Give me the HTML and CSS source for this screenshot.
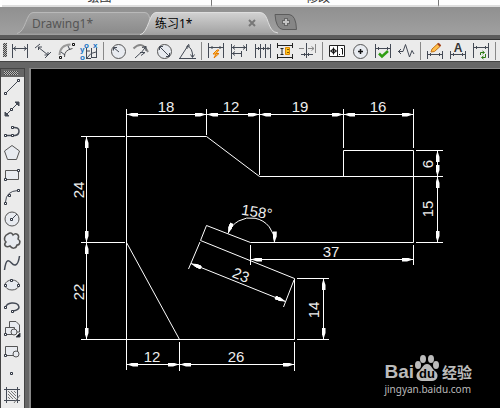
FILE: index.html
```html
<!DOCTYPE html>
<html lang="zh-CN">
<head>
  <meta charset="UTF-8" />
  <meta name="viewport" content="width=device-width, initial-scale=1.0"/>
  <title>练习1</title>
  <link rel="stylesheet" href="styles.css">
</head>
<body>

  <header class="ribbon">
    <div class="panel">绘图</div>
    <div class="panel">修改</div>
    <div class="panel last"></div>
  </header>

  <nav class="tabs">
    <a class="tab" href="#drawing1">
      <svg class="tab-shape" viewBox="0 0 138 24" preserveAspectRatio="none" aria-hidden="true">
        <defs><linearGradient id="tab-off" x2="0" y2="1"><stop offset="0" stop-color="#a2a2a2"/><stop offset="1" stop-color="#8b8b8b"/></linearGradient></defs>
        <path d="M0 22.500C9 21 9 1.500 16 1.500H128C135 1.500 132 19 138 22.500" fill="url(#tab-off)" stroke="#b9b9b9"/>
      </svg>
      <span>Drawing1*</span>
    </a>
    <a class="tab active" href="#practice1">
      <svg class="tab-shape" viewBox="0 0 138 24" preserveAspectRatio="none" aria-hidden="true">
        <defs><linearGradient id="tab-on" x2="0" y2="1"><stop offset="0" stop-color="#d2d2d2"/><stop offset="1" stop-color="#a0a0a0"/></linearGradient></defs>
        <path d="M0 24C9 21 9 1.500 16 1.500H120C130 1.500 126 21 138 22" fill="url(#tab-on)" stroke="#dedede"/>
      </svg>
      <span>练习1*</span>
      <svg class="close" viewBox="0 0 8 8" aria-hidden="true"><path d="M1 1L7 7M7 1L1 7" stroke="#777" stroke-width="2"/></svg>
    </a>
    <button class="new-tab" aria-label="New drawing">
      <svg width="24" height="18" viewBox="0 0 24 18">
        <path d="M1 1.500H15Q22 2 22.500 16.500H9Q2 16 1 1.500Z" fill="#868686" stroke="#5c5c5c"/>
        <path d="M12 5V13M8 9H16" stroke="#666" stroke-width="4"/>
        <path d="M12 6V12M9 9H15" stroke="#c4c4c4" stroke-width="2"/>
      </svg>
    </button>
  </nav>

  <div class="toolbar">
    <span class="grip"></span>
    <button aria-label="Linear"><svg class="icon"><path d="M3.500 4V18M18.500 4V18M4 8.500H18M7 6.500L4.500 8.500L7 10.500M15 6.500L17.500 8.500L15 10.500"/></svg></button>
    <button aria-label="Aligned"><svg class="icon"><path d="M3 8L8 4M13 18L19 12M6 7L16 15M6.500 10V7H10M12.500 15H16V12"/></svg></button>
    <button aria-label="Arc length"><svg class="icon"><path d="M4.500 15Q5 5 15.500 4.500" stroke="#999" stroke-width="2"/><path d="M9.500 17Q9 10 17.500 8.500" stroke="#555"/><path d="M6 12L10 15M13 6L15 10"/><path d="M4.500 16.500h2v2h-2zM17.500 3.500h2v2h-2z" fill="#fff" stroke="#111"/></svg></button>
    <button aria-label="Ordinate"><svg class="icon"><path d="M8.500 8V19M8.500 11H12M13.500 8V18M18.500 8V17M9 18L13 13.500L18 12M8 18.500H13M14 17.500H19"/><text class="blue" x="6" y="8">o</text><text class="blue" x="15" y="8">x</text><text class="blue" x="2" y="12">y</text><text class="blue" x="2" y="20">o</text></svg></button>
    <span class="sep"></span>
    <button aria-label="Radius"><svg class="icon"><circle class="ball" cx="11.500" cy="11.500" r="7"/><path d="M12 12L6.500 7.500M6.500 10.500V7.500H10"/></svg></button>
    <button aria-label="Jogged"><svg class="icon"><path d="M3.500 8.500Q12 0 18 12" stroke="#888" stroke-width="2"/><path d="M5 18L11 12.500M10 12.500H15L11 15.500M11 13L16 6.500M12 7.500L16 6.500V11"/></svg></button>
    <button aria-label="Diameter"><svg class="icon"><circle class="ball" cx="11.500" cy="11.500" r="7"/><path d="M7 7L16 16M6.500 10V6.500H10M13 16.500H16.500V13"/></svg></button>
    <button aria-label="Angular"><svg class="icon"><path d="M3 18.500H20M4 18L13 4M11 6Q17 8 16.500 17M11 9V6H14M14.500 14.500L16.500 17.500L18.500 14.500"/></svg></button>
    <span class="sep"></span>
    <button aria-label="Quick dimension"><svg class="icon"><path d="M3.500 3V18M18.500 3V18M4 7.500H18M7 6V9M15 6V9"/><path d="M12 10L8 14H11L9 18L14 13.500H11L14 10Z" fill="#ffc94a" stroke="#e67800"/></svg></button>
    <button aria-label="Baseline"><svg class="icon"><path d="M3.500 4V19M18.500 4V11M13.500 11V17M4 7.500H18M4 13.500H13M7 5.500L4.500 7.500L7 9.500M15 5.500L17.500 7.500L15 9.500M7 11.500L4.500 13.500L7 15.500"/></svg></button>
    <button aria-label="Continue"><svg class="icon"><path d="M4.500 4V18M9.500 4V18M14.500 4V18M19.500 4V18M5 8.500H19M7.500 7V10M12.500 7V10M17 7V10"/></svg></button>
    <button aria-label="Dimension space"><svg class="icon"><path d="M3.500 3V8M18.500 3V8M4 5.500H18M3.500 14V19M18.500 14V19M4 17.500H18M6.500 8.500H9.500M6.500 14.500H9.500M8 8V15" stroke="#222"/><path d="M11.500 7.500H15.500V14.500H11.500Z" fill="#ffc51f" stroke="#e08700"/><path d="M13 9.500H15M13 12.500H15" stroke="#7b5700"/></svg></button>
    <button aria-label="Dimension break"><svg class="icon"><path d="M2 8.500H7M11 8.500H17M18.500 4V13M14.500 6.500L17 8.500L14.500 10.500" stroke="#888"/><path d="M9.500 3V18M4 14.500H16M7.500 13V16M11.500 13V16"/></svg></button>
    <span class="sep"></span>
    <button aria-label="Tolerance"><svg class="icon"><path d="M3.500 5.500H18.500V16.500H3.500ZM11.500 5.500V16.500" fill="#fff" stroke="#222"/><circle cx="7.500" cy="11" r="2" fill="none" stroke="#111"/><path d="M4 11H11M7.500 7.500V14.500M13 14.500H14M15 8.500H16.500V14.500" stroke="#111"/></svg></button>
    <button aria-label="Center mark"><svg class="icon"><circle class="ball" cx="11.500" cy="11.500" r="7"/><path d="M9 11.500H14M11.500 9V14" stroke="#111" stroke-width="1.500"/></svg></button>
    <button aria-label="Inspection"><svg class="icon"><path d="M3.500 4V18M18.500 4V18M4 8.500H18M6.500 7V10M15.500 7V10"/><path d="M7 13.500L10 16.500L16 11" stroke="#2f9d13" stroke-width="2.500"/></svg></button>
    <button aria-label="Jogged linear"><svg class="icon"><path d="M3 11.500H8L10.500 4.500L14.500 17L17 10.500L19 14M6 9L3.500 11.500L6 14"/></svg></button>
    <span class="sep"></span>
    <button aria-label="Dimension edit"><svg class="icon"><path d="M3.500 11V19M18.500 11V19M4 14.500H18M6.500 13V16M15.500 13V16"/><path d="M7 12L8 9L14 3.500L16.500 6L10.500 11.500Z" fill="#ffbd4a" stroke="#c57518"/><path d="M14 3.500L16.500 6" stroke="#9e3f20" stroke-width="2"/></svg></button>
    <button aria-label="Dimension text edit"><svg class="icon"><path d="M3.500 11V19M18.500 11V19M4 14.500H18M6.500 13V16M15.500 13V16"/><text class="letter" x="11" y="12">A</text></svg></button>
    <button aria-label="Dimension update"><svg class="icon"><path d="M3.500 3V18M18.500 3V18M4 7.500H18M6.500 6V9M15.500 6V9"/><path d="M10.500 15V12.500H14M12.500 11L14.500 12.500L12.500 14M15.500 14V17.500H12M13.500 16L11.500 17.500L13.500 19" stroke="#2c7a12"/></svg></button>
    <span class="sep"></span>
  </div>

  <main class="workspace">
    <div class="palette">
      <span class="grip flat"></span>
      <button aria-label="Line"><svg class="icon"><path d="M5 17L17 5"/><path class="node" d="M3.500 16.500h2v2h-2zM16.500 3.500h2v2h-2z"/></svg></button>
      <button aria-label="Construction line"><svg class="icon"><path d="M4 18L18 4"/><path d="M14 4H18V8ZM4 14V18H8Z" fill="#444a55"/><path class="node" d="M9.500 10.500h2v2h-2z"/></svg></button>
      <button aria-label="Polyline"><svg class="icon"><path d="M5 15.500H14Q18 15 18 11T12 7.500" stroke-width="1.500"/><path class="node" d="M3.500 14.500h2v2h-2zM10.500 14.500h2v2h-2zM10.500 6.500h2v2h-2z"/></svg></button>
      <button aria-label="Polygon"><svg class="icon"><path class="shape" d="M11 3.500L18.500 9L15.500 17.500H6.500L3.500 9Z"/></svg></button>
      <button aria-label="Rectangle"><svg class="icon"><path class="shape" d="M4.500 6.500H17.500V15.500H4.500Z"/><path class="node" d="M3.500 14.500h2v2h-2zM16.500 5.500h2v2h-2z"/></svg></button>
      <button aria-label="Arc"><svg class="icon"><path d="M4.500 16Q5 5 17 4.500"/><path class="node" d="M3.500 16.500h2v2h-2zM7.500 8.500h2v2h-2zM16.500 3.500h2v2h-2z"/></svg></button>
      <button aria-label="Circle"><svg class="icon"><circle class="ball" cx="11" cy="11" r="7"/><path d="M11 11L16 6"/><path class="node" d="M9.500 10.500h2v2h-2z"/></svg></button>
      <button aria-label="Revision cloud"><svg class="icon"><path class="shape" d="M7 4C9 2 11 3 12 5C15 2 19 5 17 9C20 11 19 15 16 15C15 19 11 19 9 16C5 18 2 15 5 12C2 9 4 5 7 4Z" stroke-width="1.500"/></svg></button>
      <button aria-label="Spline"><svg class="icon"><path d="M3.500 18C5 6 8 8 10.500 11S17 15 18.500 4" stroke-width="1.500"/></svg></button>
      <button aria-label="Ellipse"><svg class="icon"><ellipse class="shape" cx="11" cy="11" rx="7" ry="5"/><path class="node" d="M3.500 10.500h2v2h-2zM16.500 10.500h2v2h-2zM9.500 5.500h2v2h-2z"/></svg></button>
      <button aria-label="Ellipse arc"><svg class="icon"><path d="M5 12C4 6 17 5 18 11Q18 14 12 15" stroke-width="1.500"/><path class="node" d="M3.500 10.500h2v2h-2zM10.500 14.500h2v2h-2z"/></svg></button>
      <button aria-label="Insert block"><svg class="icon"><path class="shape" d="M8.500 3.500H15L18.500 7V14H8.500Z"/><path class="shape" d="M4.500 9.500H13.500V16.500H4.500Z"/><circle class="ball" cx="13" cy="14" r="3"/><path d="M19 15V19H15Z" fill="#111"/><path class="node" d="M3.500 15.500h2v2h-2z"/></svg></button>
      <button aria-label="Make block"><svg class="icon"><path class="shape" d="M4.500 6.500H16.500V15.500H4.500Z"/><circle class="ball" cx="15" cy="14" r="3"/><path class="node" d="M3.500 14.500h2v2h-2z"/></svg></button>
      <button aria-label="Point"><svg class="icon"><path class="node" d="M9.500 10.500h2v2h-2z"/></svg></button>
      <button aria-label="Hatch"><svg class="icon"><path d="M3 5.500H19M3 16.500H19M5.500 3V19M16.500 3V19"/><path d="M7 7L15 15M7 10L12 15M7 13L9 15M10 7L15 12M13 7L15 9M13 19L19 11" stroke="#777"/></svg></button>
    </div>

    <div class="canvas">
      <svg class="drawing" viewBox="31 69 469 339" preserveAspectRatio="xMinYMin meet" role="img" aria-label="练习1">
        <defs>
          <marker id="arrow" viewBox="0 0 12 4" refX="12" refY="2" markerWidth="12" markerHeight="4" markerUnits="userSpaceOnUse" orient="auto-start-reverse">
            <path d="M1 0L6 0L12 2L6 4L1 4Z" fill="#fff"/>
          </marker>
        </defs>
        <!-- part outline -->
        <g class="outline">
          <path d="M126.500 136.500H206.500L259.500 176.500H413.500M343.500 176.500V150.500H413.500V242.500H250.500L206.500 225.500L200.500 240.500L294.500 278.500V339.500H179.500L126.500 242.500V136.500"/>
        </g>
        <!-- extension lines -->
        <g class="outline">
          <path d="M126.500 109V370M206.500 109V135M259.500 109V175M343.500 109V148M413.500 109V148"/>
          <path d="M81 136.500H125M81 242.500H125M81 339.500H180M179.500 342V371M294.500 342V371"/>
          <path d="M416 150.500H443M413 176.500H443M416 242.500H443M413.500 245V265M250.500 245V265"/>
          <path d="M297 278.500H329M297 339.500H329M200 242L188.500 269M294 280L283.500 307"/>
        </g>
        <g class="dims">
          <path d="M127 114.500H206"/><path d="M207 114.500H259"/><path d="M260 114.500H343"/><path d="M344 114.500H413"/>
          <path d="M86.500 137V242"/><path d="M86.500 243V339"/>
          <path d="M127 364.500H179"/><path d="M180 364.500H294"/>
          <path d="M251 259.500H413"/>
          <path d="M437.500 177V242"/>
          <path d="M323.500 279V339"/>
          <path d="M191 263.500L285.500 301.500"/>
          <path d="M228 233.500A24 24 0 0 1 274.500 242.500"/>
        </g>
        <g class="dims">
          <path d="M437.500 151V176"/>
        </g>
        <g class="values">
          <text x="166" y="112">18</text>
          <text x="231" y="112">12</text>
          <text x="300" y="112">19</text>
          <text x="378" y="112">16</text>
          <text x="152" y="362">12</text>
          <text x="236" y="362">26</text>
          <text x="331" y="257">37</text>
          <text transform="translate(84 190) rotate(-90)">24</text>
          <text transform="translate(84 292) rotate(-90)">22</text>
          <text transform="translate(433 164) rotate(-90)">6</text>
          <text transform="translate(433 209) rotate(-90)">15</text>
          <text transform="translate(319 310) rotate(-90)">14</text>
          <text transform="translate(239 280) rotate(22)">23</text>
          <text transform="translate(256 217) rotate(9)">158°</text>
        </g>
      </svg>

      <div class="watermark">
        <div class="brand">
          <span class="bai">Bai</span>
          <svg class="paw" width="26" height="28" viewBox="0 0 26 28">
            <g fill="#bbb">
              <ellipse cx="4" cy="11" rx="3" ry="4"/><ellipse cx="9" cy="5" rx="3" ry="4"/><ellipse cx="17" cy="5" rx="3" ry="4"/><ellipse cx="22" cy="11" rx="3" ry="4"/>
              <path d="M13 10C17 10 18 15 21 17C26 21 23 27 18 27H8C3 27 0 21 5 17C8 15 9 10 13 10Z"/>
            </g>
            <text x="13" y="24">du</text>
          </svg>
          <span class="jingyan">经验</span>
        </div>
        <div class="site">jingyan.baidu.com</div>
      </div>
    </div>
  </main>

</body>
</html>
```

FILE: styles.css
```css
* {
  box-sizing: border-box;
}
body {
  margin: 0;
  min-height: 100vh;
  display: flex;
  flex-direction: column;
  overflow: hidden;
  background: #666;
  font-family: "Liberation Sans", "Noto Sans CJK SC", sans-serif;
  font-size: 12px;
}
button {
  display: block;
  padding: 0;
  border: none;
  background: none;
}
svg {
  display: block;
}
.ribbon {
  display: flex;
  align-items: flex-end;
  height: 7px;
  overflow: hidden;
  background: #fff;
  padding-left: 2px;
}
.panel {
  flex: 0 0 210px;
  height: 24px;
  padding-right: 14px;
  line-height: 30px;
  text-align: center;
  color: #333;
  background: #fdfdfd;
  border-right: 1px solid #777;
  border-bottom: 2px solid #ddd;
}
.panel + .panel {
  flex-basis: 227px;
}
.panel.last {
  flex: 1;
  border-right: none;
}
.tabs {
  display: flex;
  align-items: flex-end;
  height: 28px;
  padding-left: 17px;
  background: linear-gradient(#909090, #a0a0a0);
}
.tab {
  position: relative;
  display: flex;
  align-items: center;
  justify-content: space-between;
  width: 138px;
  height: 24px;
  padding: 0 15px;
  color: #555;
  font-family: "Noto Sans", "Noto Sans CJK SC", sans-serif;
  text-decoration: none;
}
.tab.active {
  margin-left: -15px;
  padding: 0 22px 0 15px;
  color: #000;
}
.tab-shape {
  position: absolute;
  inset: 0;
  width: 100%;
  height: 100%;
}
.tab span,
.close {
  position: relative;
}
.close {
  width: 8px;
  height: 8px;
}
.new-tab {
  margin: 0 0 4px -4px;
}
.toolbar {
  display: flex;
  height: 33px;
  padding-left: 1px;
  background: #ebebeb;
  border-top: 4px solid #5c5c5c;
  border-bottom: 6px solid #666;
  box-shadow: inset 0 1px #333, inset 0 -1px #444;
}
.toolbar button,
.palette button {
  flex: none;
}
.grip {
  flex: none;
  width: 4px;
  height: 14px;
  margin: 4px 2px 0 2px;
  background: repeating-conic-gradient(#444 0 25%, #bbb 0 50%) 0 0 / 2px 2px;
}
.grip.flat {
  width: 14px;
  height: 4px;
  margin: 2px 0 1px 3px;
}
.sep {
  flex: none;
  width: 1px;
  height: 18px;
  margin: 3px 3px 0 2px;
  background: #888;
}
.icon {
  width: 23px;
  height: 22px;
  fill: none;
  stroke: #444a55;
}
.ball,
.shape {
  fill: #e8ebf0;
  stroke: #555;
}
.node {
  fill: #fff;
  stroke: #303642;
}
.icon text {
  stroke: none;
  font-weight: bold;
}
.blue {
  fill: #1673c4;
  font-size: 8px;
}
.letter {
  fill: #333;
  font-size: 12px;
  text-anchor: middle;
}
.workspace {
  flex: 1;
  display: flex;
}
.palette {
  display: flex;
  flex-direction: column;
  width: 25px;
  margin-right: 4px;
  background: linear-gradient(#666 8px, #ebebeb 8px);
  border: 1px solid #444;
  border-bottom: none;
}
.canvas {
  position: relative;
  flex: 1;
  background: #000;
  border-top: 1px solid #888;
  border-left: 2px solid #888;
}
.drawing {
  width: 100%;
}
.outline,
.dims {
  fill: none;
  stroke: #fff;
}
.dims path {
  marker-start: url(#arrow);
  marker-end: url(#arrow);
}
.values {
  fill: #eee;
  font-size: 15px;
  text-anchor: middle;
}
.watermark {
  position: absolute;
  right: 28px;
  bottom: 12px;
  color: #bbb;
}
.brand {
  display: flex;
  align-items: flex-end;
  height: 28px;
}
.bai {
  font-size: 19px;
  font-weight: bold;
  line-height: 20px;
}
.paw text {
  fill: #000;
  font-size: 13px;
  font-weight: bold;
  text-anchor: middle;
}
.jingyan {
  padding-left: 2px;
  font-size: 15px;
  font-weight: bold;
  line-height: 18px;
}
.site {
  font-family: "Noto Sans", sans-serif;
  font-size: 10px;
  line-height: 14px;
}
```
